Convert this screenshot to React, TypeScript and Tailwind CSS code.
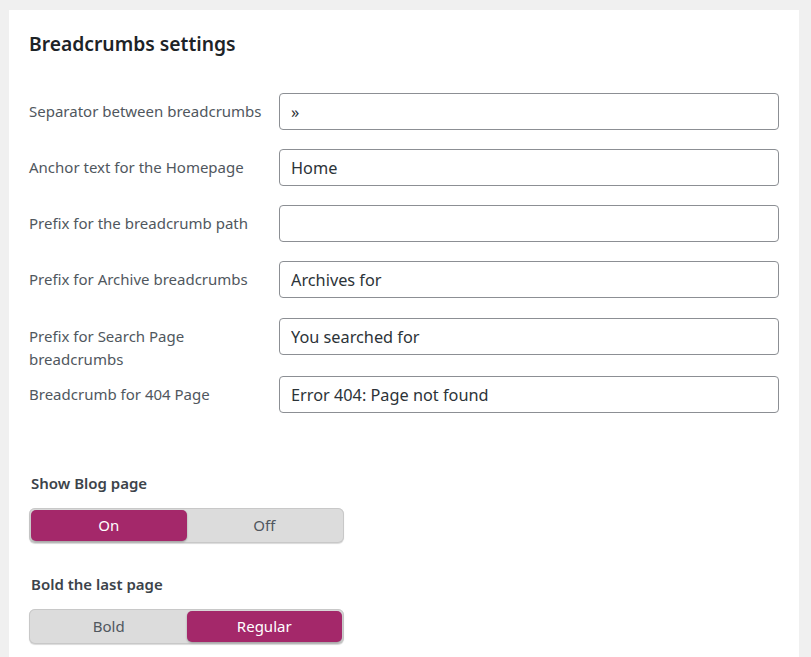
import React, { useState } from 'react';

const fields = [
  { label: 'Separator between breadcrumbs', value: '»', mb: 'mb-[19px]' },
  { label: 'Anchor text for the Homepage', value: 'Home', mb: 'mb-[19px]' },
  { label: 'Prefix for the breadcrumb path', value: '', mb: 'mb-[19px]' },
  { label: 'Prefix for Archive breadcrumbs', value: 'Archives for', mb: 'mb-[20px]' },
  { label: 'Prefix for Search Page breadcrumbs', value: 'You searched for', mb: 'mb-[21px]' },
  { label: 'Breadcrumb for 404 Page', value: 'Error 404: Page not found', mb: '' },
];

interface ToggleProps {
  title: string;
  options: string[];
  value: number;
  onChange: (v: number) => void;
}

const Toggle: React.FC<ToggleProps> = ({ title, options, value, onChange }) => {
  return (
    <div>
      <div className="text-[15px] font-semibold text-[#3c434a] leading-[20px] pl-[2px]">{title}</div>
      <div className="mt-[15px] flex w-[315px] h-[35px] p-[2px] rounded-[6px] bg-[#dcdcdc] shadow-[inset_0_0_0_1px_#c8c8c8,0_1px_1px_rgba(0,0,0,0.15)]">
        {options.map((opt, i) => (
          <button
            key={opt}
            type="button"
            onClick={() => onChange(i)}
            className={
              i === value
                ? 'flex-1 rounded-[5px] bg-[#a4286a] text-white text-[15px] shadow-[0_1px_2px_rgba(0,0,0,0.3)]'
                : 'flex-1 rounded-[5px] text-[#50575e] text-[15px]'
            }
          >
            {opt}
          </button>
        ))}
      </div>
    </div>
  );
};

export default function App() {
  const [values, setValues] = useState(fields.map(f => f.value));
  const [blog, setBlog] = useState(0);
  const [bold, setBold] = useState(1);

  return (
    <div className="h-[657px] bg-[#f0f0f0] pl-[9px] pr-[12px] pt-[10px] overflow-hidden font-['Noto_Sans',sans-serif]">
      <div className="bg-white h-full pl-[20px] pr-[20px] pt-[20px]">
        <h1 className="text-[19.3px] font-semibold text-[#1d2327] leading-[28px]">Breadcrumbs settings</h1>

        <div className="mt-[35px]">
          {fields.map((f, i) => (
            <div key={f.label} className={`flex items-start h-[37px] ${f.mb}`}>
              <label className="w-[250px] pt-[7px] pr-[12px] text-[15px] leading-[23px] text-[#50575e]">
                {f.label}
              </label>
              <input
                type="text"
                value={values[i]}
                onChange={e => {
                  const next = [...values];
                  next[i] = e.target.value;
                  setValues(next);
                }}
                className="w-[500px] h-[37px] px-[11px] rounded-[4px] border border-[#8c8f94] text-[16.3px] text-[#2c3338] outline-none"
              />
            </div>
          ))}
        </div>

        <div className="mt-[60px]">
          <Toggle title="Show Blog page" options={['On', 'Off']} value={blog} onChange={setBlog} />
        </div>
        <div className="mt-[31px]">
          <Toggle title="Bold the last page" options={['Bold', 'Regular']} value={bold} onChange={setBold} />
        </div>
      </div>
    </div>
  );
}
